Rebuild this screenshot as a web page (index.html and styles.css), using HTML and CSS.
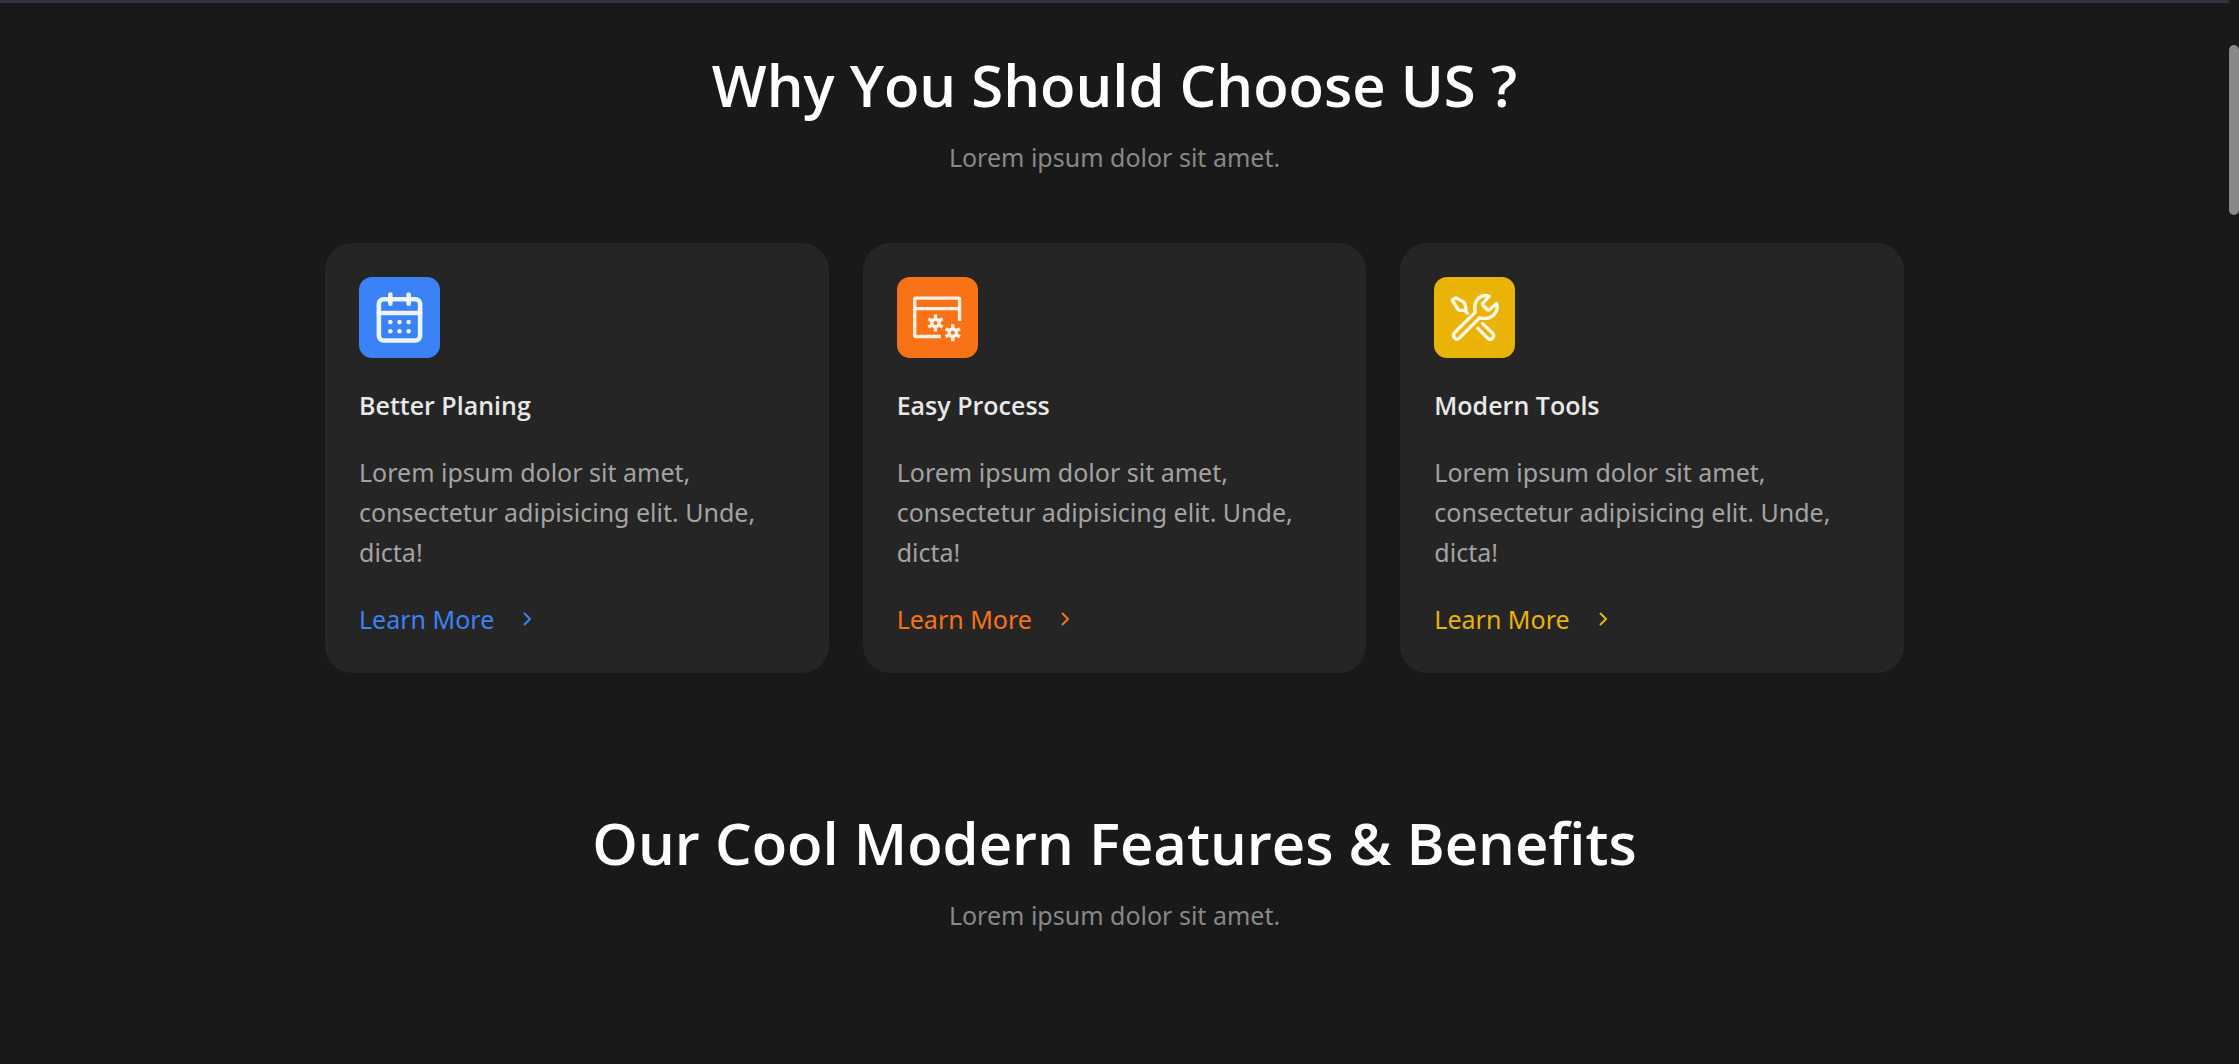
FILE: index.html
```html
<!DOCTYPE html>
<html lang="en">
<head>
<meta charset="utf-8">
<meta name="viewport" content="width=device-width, initial-scale=1">
<title>Why You Should Choose US ?</title>
<link rel="stylesheet" href="styles.css">
</head>
<body>
<div class="scrollbar" aria-hidden="true"><div class="scrollbar-thumb"></div></div>
<main class="page">
  <section class="section">
    <header class="section-head">
      <h2 class="section-title">Why You Should Choose US ?</h2>
      <p class="section-text">Lorem ipsum dolor sit amet.</p>
    </header>
    <div class="cards">
      <article class="card card-blue">
        <div class="card-icon">
          <svg viewBox="0 0 24 24" aria-hidden="true">
            <g class="line" stroke-width="2">
              <rect x="3" y="4" width="18" height="18" rx="2"/>
              <path d="M3 10H21"/>
              <path d="M8 2V6"/>
              <path d="M16 2V6"/>
            </g>
            <g class="fill">
              <circle cx="8" cy="14" r="1"/><circle cx="12" cy="14" r="1"/><circle cx="16" cy="14" r="1"/>
              <circle cx="8" cy="18" r="1"/><circle cx="12" cy="18" r="1"/><circle cx="16" cy="18" r="1"/>
            </g>
          </svg>
        </div>
        <h3 class="card-title">Better Planing</h3>
        <p class="card-text">Lorem ipsum dolor sit amet, consectetur adipisicing elit. Unde, dicta!</p>
        <a class="card-link" href="#planing">Learn More <svg class="chevron" viewBox="0 0 8 14" aria-hidden="true"><path d="M1 1L7 7L1 13"/></svg></a>
      </article>
      <article class="card card-orange">
        <div class="card-icon">
          <svg viewBox="0 0 162 162" aria-hidden="true">
            <g class="line butt" stroke-width="10">
              <path d="M146 91V27Q146 24 143 24H17Q14 24 14 27V134Q14 137 17 137H91M19 55H141"/>
              <path d="M75 86A11 11 0 1 1 75 108A11 11 0 1 1 75 86ZM75 85V72M85 91L96 85M85 103L96 109M75 109V122M65 103L54 109M65 91L54 85"/>
              <path d="M126 115A11 11 0 1 1 126 137A11 11 0 1 1 126 115ZM126 114V101M136 120L147 114M136 132L147 138M126 138V151M116 132L105 138M116 120L105 114"/>
            </g>
          </svg>
        </div>
        <h3 class="card-title">Easy Process</h3>
        <p class="card-text">Lorem ipsum dolor sit amet, consectetur adipisicing elit. Unde, dicta!</p>
        <a class="card-link" href="#process">Learn More <svg class="chevron" viewBox="0 0 8 14" aria-hidden="true"><path d="M1 1L7 7L1 13"/></svg></a>
      </article>
      <article class="card card-yellow">
        <div class="card-icon">
          <svg viewBox="0 0 162 162" aria-hidden="true">
            <g class="line" stroke-width="10">
              <path d="M17 32Q15 29 18 27L24 24Q27 23 30 25L48 35Q52 38 53 42L56 54Q56 60 50 60L39 60Q35 60 32 56ZM54 62L60 68"/>
              <path d="M124 18C98 10 76 32 83 66L22 126Q16 133 21 140Q28 149 36 142L96 82C132 90 154 65 146 40L124 59Q122 60 119 58L106 45Q103 42 106 39Z"/>
              <path d="M91 113L120 142Q127 149 134 142Q141 134 134 127L105 99"/>
            </g>
          </svg>
        </div>
        <h3 class="card-title">Modern Tools</h3>
        <p class="card-text">Lorem ipsum dolor sit amet, consectetur adipisicing elit. Unde, dicta!</p>
        <a class="card-link" href="#tools">Learn More <svg class="chevron" viewBox="0 0 8 14" aria-hidden="true"><path d="M1 1L7 7L1 13"/></svg></a>
      </article>
    </div>
  </section>
  <section class="section">
    <header class="section-head">
      <h2 class="section-title">Our Cool Modern Features &amp; Benefits</h2>
      <p class="section-text">Lorem ipsum dolor sit amet.</p>
    </header>
  </section>
</main>
</body>
</html>
```
FILE: styles.css
```css
* {
  box-sizing: border-box;
  margin: 0;
}

body {
  padding-right: 10px;
  background: #191919;
  color: #fff;
  font-family: "Segoe UI", "Noto Sans", "Open Sans", sans-serif;
  font-size: 25px;
  line-height: 40px;
}

.scrollbar {
  position: fixed;
  inset: 0 0 0 auto;
  width: 10px;
  padding-top: 45px;
  background: #191919;
}

.scrollbar-thumb {
  height: 170px;
  border-radius: 5px;
  background: #888;
}

.page {
  border-top: 3px solid #2e3440;
}

.section {
  max-width: 1579px;
  margin: 0 auto;
  padding: 42px 0 88px;
}

.section-head {
  display: flex;
  flex-direction: column;
  gap: 12px;
  margin-bottom: 66px;
  text-align: center;
}

.section-title {
  font-family: "Segoe UI", "Open Sans", sans-serif;
  font-size: 58px;
  font-weight: 600;
  line-height: 80px;
}

.section-text {
  color: #888;
}

.cards {
  display: grid;
  grid-template-columns: repeat(3, 1fr);
  gap: 34px;
}

.card {
  display: flex;
  flex-direction: column;
  align-items: flex-start;
  gap: 27px;
  padding: 34px;
  border-radius: 27px;
  background: #252525;
}

.card-blue { --accent: #3b82f6; }
.card-orange { --accent: #f97316; }
.card-yellow { --accent: #eab308; }

.card-icon {
  width: 81px;
  height: 81px;
  padding: 13px;
  border-radius: 13px;
  background: var(--accent);
}

.card-icon svg {
  display: block;
  width: 100%;
}

.line {
  fill: none;
  stroke: rgba(255, 255, 255, 0.9);
  stroke-linecap: round;
  stroke-linejoin: round;
}

.butt {
  stroke-linecap: butt;
}

.fill {
  fill: rgba(255, 255, 255, 0.9);
}

.card-title {
  color: #e8e8e8;
  font-family: "Segoe UI", "Open Sans", sans-serif;
  font-size: 25px;
  font-weight: 600;
}

.card-text {
  color: #a3a3a3;
}

.card-link {
  display: flex;
  align-items: center;
  gap: 29px;
  color: var(--accent);
  text-decoration: none;
}

.chevron {
  width: 8px;
  height: 14px;
  fill: none;
  stroke: currentColor;
  stroke-width: 2;
}
```
